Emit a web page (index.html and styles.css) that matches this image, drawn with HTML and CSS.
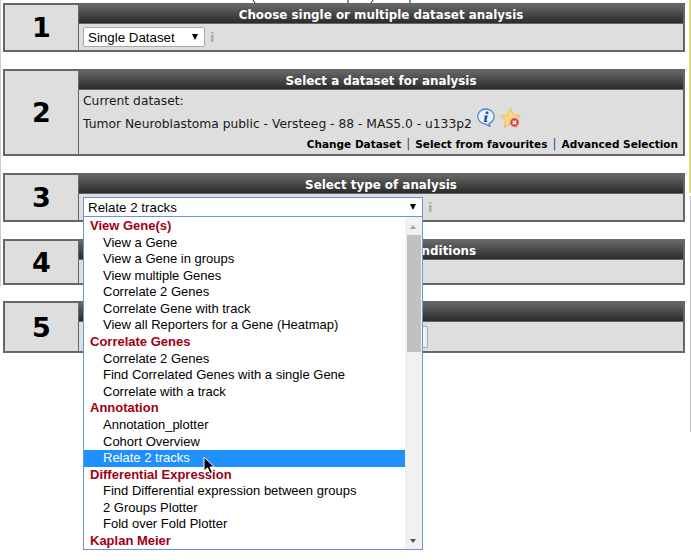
FILE: index.html
```html
<!DOCTYPE html>
<html lang="en">

<head>
    <meta charset="UTF-8">
    <meta name="viewport" content="width=device-width, initial-scale=1.0">
    <title>Analysis steps</title>
    <link rel="stylesheet" href="styles.css">
</head>

<body>
    <!-- bits of the window behind that show along the edges -->
    <div class="edge-left"></div>
    <div class="edge-right"></div>
    <div class="edge-right-low"></div>
    <svg class="top-scraps" width="691" height="3" viewBox="0 0 691 3">
        <path d="M253 0l2 3M348 0v3M373 0l-2 3M410 0v3" stroke="#222" stroke-width="1" fill="none" />
    </svg>

    <div class="steps">
        <section class="step step-1">
            <div class="step-num">1</div>
            <div class="step-main">
                <h2 class="step-title">Choose single or multiple dataset analysis</h2>
                <div class="step-body row">
                    <span class="select-wrap wrap-small">
                        <select class="picker">
                            <option>Single Dataset</option>
                        </select>
                    </span>
                    <span class="hint">i</span>
                </div>
            </div>
        </section>

        <section class="step step-2">
            <div class="step-num">2</div>
            <div class="step-main">
                <h2 class="step-title">Select a dataset for analysis</h2>
                <div class="step-body dataset">
                    <div class="dataset-label">Current dataset:</div>
                    <div class="dataset-name">
                        Tumor Neuroblastoma public - Versteeg - 88 - MAS5.0 - u133p2
                        <svg class="icon-info" width="20" height="19" viewBox="0 0 20 19">
                            <path d="M10 1a8 7.5 0 0 1 3 14.5l1 3-4.5-2.5A8 7.5 0 0 1 10 1z" fill="#eaf3fc" stroke="#4a86c8" stroke-width="1.3" />
                            <circle cx="11" cy="4.8" r="1.5" fill="#1f55b0" />
                            <path d="M8.5 7.5h3.3l-1.5 5.500h1.400l-.4 1H7.800l1-5.500H8z" fill="#1f55b0" />
                        </svg>
                        <svg class="icon-star" width="22" height="21" viewBox="0 0 22 21">
                            <path d="M10.500.5l3 6.500 7 .8-5.200 4.700 1.500 7-6.300-3.600-6.300 3.600 1.500-7L.5 7.800l7-.8z" fill="#fbd980" stroke="#e8bd62" stroke-width="1" />
                            <circle cx="14.5" cy="14.500" r="4.700" fill="#d8413f" stroke="#f4c4c0" stroke-width="1" />
                            <path d="M12.700 12.700l3.600 3.600M16.300 12.700l-3.600 3.600" stroke="#fff" stroke-width="1.500" />
                        </svg>
                    </div>
                    <div class="dataset-links">
                        <a>Change Dataset</a><span class="sep">|</span><a>Select from favourites</a><span class="sep">|</span><a>Advanced Selection</a>
                    </div>
                </div>
            </div>
        </section>

        <section class="step step-3">
            <div class="step-num">3</div>
            <div class="step-main">
                <h2 class="step-title">Select type of analysis</h2>
                <div class="step-body row">
                    <span class="select-wrap wrap-wide">
                        <select class="picker picker-open">
                            <option>Relate 2 tracks</option>
                        </select>
                    </span>
                    <span class="hint">i</span>
                </div>
            </div>
        </section>

        <section class="step step-4">
            <div class="step-num">4</div>
            <div class="step-main">
                <h2 class="step-title">Select tracks and conditions</h2>
                <div class="step-body"></div>
            </div>
        </section>

        <section class="step step-5">
            <div class="step-num">5</div>
            <div class="step-main">
                <h2 class="step-title"></h2>
                <div class="step-body">
                    <button class="run-btn"></button>
                </div>
            </div>
        </section>
    </div>

    <div class="dropdown">
        <ul class="dropdown-list">
            <li class="group">View Gene(s)</li>
            <li>View a Gene</li>
            <li>View a Gene in groups</li>
            <li>View multiple Genes</li>
            <li>Correlate 2 Genes</li>
            <li>Correlate Gene with track</li>
            <li>View all Reporters for a Gene (Heatmap)</li>
            <li class="group">Correlate Genes</li>
            <li>Correlate 2 Genes</li>
            <li>Find Correlated Genes with a single Gene</li>
            <li>Correlate with a track</li>
            <li class="group">Annotation</li>
            <li>Annotation_plotter</li>
            <li>Cohort Overview</li>
            <li class="current">Relate 2 tracks</li>
            <li class="group">Differential Expression</li>
            <li>Find Differential expression between groups</li>
            <li>2 Groups Plotter</li>
            <li>Fold over Fold Plotter</li>
            <li class="group">Kaplan Meier</li>
        </ul>
        <div class="scrollbar">
            <span class="arrow-up"></span>
            <span class="thumb"></span>
            <span class="arrow-down"></span>
        </div>
    </div>

    <svg class="mouse" width="13" height="19" viewBox="0 0 13 19">
        <path d="M1 1v14l3.500-3.200 2.500 5.700 2.500-1-2.500-5.500h4.500z" fill="#000" stroke="#fff" stroke-width="1" />
    </svg>
</body>

</html>
```

FILE: styles.css
```css
body {
    font-family: "DejaVu Sans", Verdana, sans-serif;
    font-size: 12.3px;
    color: #1a1a1a;
    margin: 0;
    background: #fff;
}

.steps {
    padding: 3px 6px 0 3px;
    display: flex;
    flex-direction: column;
    gap: 17px;
}

.step {
    box-sizing: border-box;
    display: grid;
    grid-template-columns: 74px 1fr;
    border: 2px solid #666;
    background: #dedede;
}

.step-1 {
    height: 49px;
}

.step-2 {
    height: 87px;
}

.step-3 {
    height: 49px;
}

.step-4 {
    height: 46px;
}

.step-5 {
    height: 52px;
    margin-top: -1px;
}

.step-num {
    display: flex;
    align-items: center;
    justify-content: center;
    font-size: 27px;
    font-weight: bold;
    color: #000;
    border-right: 1px solid #666;
}

.step-main {
    display: flex;
    flex-direction: column;
    min-width: 0;
}

.step-title {
    margin: 0;
    height: 18px;
    line-height: 20px;
    flex: none;
    text-align: center;
    font-size: 11.9px;
    font-weight: bold;
    color: #fff;
    background: linear-gradient(to bottom, #666, #2b2b2b);
    border-bottom: 1px solid #666;
}

.step-body {
    flex: 1;
    padding: 0 5px 0 4px;
}

.row {
    display: flex;
    align-items: center;
    gap: 5px;
}

.select-wrap {
    position: relative;
    display: inline-block;
}

.select-wrap::after {
    content: "";
    position: absolute;
    right: 7px;
    top: 7px;
    border-left: 3.5px solid transparent;
    border-right: 3.5px solid transparent;
    border-top: 6px solid #000;
}

.picker {
    appearance: none;
    display: block;
    width: 100%;
    height: 20px;
    padding: 0 0 0 4px;
    font-family: "Liberation Sans", Arial, sans-serif;
    font-size: 13.33px;
    color: #000;
    background: #fff;
    border: 1px solid #a9a9a9;
    border-radius: 2px;
}

.picker-open {
    border-color: #6f93d8;
    border-radius: 0;
}

.wrap-small {
    width: 122px;
}

.wrap-wide {
    width: 340px;
}

.hint {
    font-size: 13px;
    font-weight: bold;
    color: #aaa;
}

.dataset-label {
    margin-top: 3px;
    line-height: 16px;
}

.dataset-name {
    margin-top: -1px;
    line-height: 21px;
    height: 21px;
    white-space: nowrap;
}

.icon-info {
    vertical-align: 1px;
}

.icon-star {
    vertical-align: -1px;
}

.dataset-links {
    margin-top: 8px;
    text-align: right;
    font-size: 10.5px;
    font-weight: bold;
    color: #000;
    line-height: 14px;
}

.sep {
    margin: 0 5px;
    font-size: 12px;
    font-weight: normal;
    color: #1c4f8c;
}

.run-btn {
    display: block;
    margin-top: 4px;
    width: 345px;
    height: 22px;
    background: #efefef;
    border: 1px solid #a9a9a9;
    border-radius: 2px;
}

/* open list of the analysis select, lies over steps 3 to 5 */
.dropdown {
    position: absolute;
    left: 83px;
    top: 217px;
    width: 338px;
    height: 332px;
    display: flex;
    background: #fff;
    border: 1px solid #6f93d8;
    border-top: none;
    overflow: hidden;
}

.dropdown-list {
    list-style: none;
    margin: 0;
    padding: 1px 0 0;
    flex: 1;
    font-family: "Liberation Sans", Arial, sans-serif;
    font-size: 13px;
    color: #000;
}

.dropdown-list li {
    height: 16.58px;
    line-height: 16.58px;
    padding-left: 19px;
    white-space: nowrap;
}

.dropdown-list .group {
    padding-left: 6px;
    font-weight: bold;
    color: #a00014;
}

.dropdown-list .current {
    background: #1e90ff;
    color: #fff;
}

.scrollbar {
    position: relative;
    width: 17px;
    background: #f1f1f1;
}

.thumb {
    position: absolute;
    left: 2px;
    right: 1px;
    top: 18px;
    height: 117px;
    background: #c1c1c1;
}

.arrow-up,
.arrow-down {
    position: absolute;
    left: 5px;
    border-left: 3.5px solid transparent;
    border-right: 3.5px solid transparent;
}

.arrow-up {
    top: 8px;
    border-bottom: 4px solid #a3a3a3;
}

.arrow-down {
    bottom: 6px;
    border-top: 4px solid #505050;
}

.mouse {
    position: absolute;
    left: 203px;
    top: 456px;
}

.edge-left {
    position: absolute;
    left: 0;
    top: 0;
    width: 1px;
    height: 286px;
    background: #ccc;
}

.edge-right {
    position: absolute;
    left: 689px;
    top: 0;
    width: 2px;
    height: 193px;
    background: #dbe07a;
}

.edge-right-low {
    position: absolute;
    left: 690px;
    top: 196px;
    width: 1px;
    height: 236px;
    background: #bbb;
}

.top-scraps {
    position: absolute;
    left: 0;
    top: 0;
}
```
